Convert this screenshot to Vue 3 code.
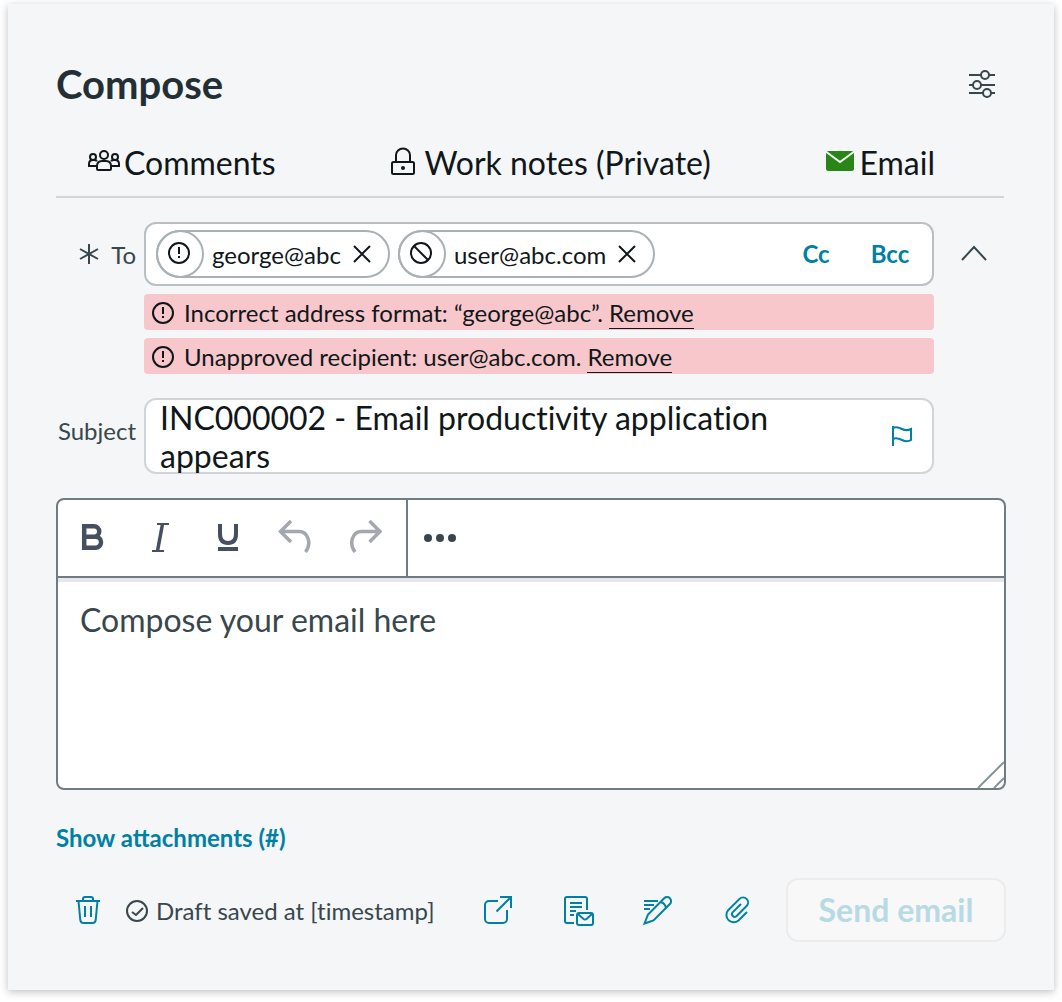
<script setup>
import { ref } from 'vue'

const recipients = ref([
  { address: 'george@abc', status: 'invalid' },
  { address: 'user@abc.com', status: 'blocked' },
])
const errors = ref([
  { id: 1, text: 'Incorrect address format: “george@abc”.' },
  { id: 2, text: 'Unapproved recipient: user@abc.com.' },
])
const subject = ref('INC000002 - Email productivity application appears')
const message = ref('')
</script>

<template>
  <main class="card">
    <header class="header">
      <h1>Compose</h1>
      <button class="icon-btn settings" type="button" aria-label="Settings">
        <svg width="32" height="32" viewBox="0 0 32 32" fill="none" stroke="currentColor" stroke-width="2">
          <path d="M3 7h12M23 7h6M3 17h4M15 17h14M3 25h14M25 25h4" />
          <circle cx="19" cy="7" r="4" /><circle cx="11" cy="17" r="4" /><circle cx="21" cy="25" r="4" />
        </svg>
      </button>
    </header>

    <nav class="tabs">
      <button class="tab" type="button">
        <svg width="32" height="32" viewBox="0 0 32 32" fill="none" stroke="currentColor" stroke-width="2">
          <circle cx="16" cy="9" r="4" />
          <path d="M9 23v-3q0-5 5-5h4q5 0 5 5v3q0 1-1 1H10q-1 0-1-1z" />
          <circle cx="5" cy="11" r="3" /><circle cx="27" cy="11" r="3" />
          <path d="M9 20H1v-2q0-4 4-4h1q2 0 3 1M23 20h8v-2q0-4-4-4h-1q-2 0-3 1" />
        </svg>
        <span>Comments</span>
      </button>
      <button class="tab" type="button">
        <svg width="32" height="32" viewBox="0 0 32 32" fill="none" stroke="currentColor" stroke-width="2">
          <rect x="4" y="16" width="22" height="12" rx="1.5" />
          <path d="M8 16V9a7 6.500 0 0 1 14 0v7" />
          <circle cx="15" cy="22" r="2" fill="currentColor" stroke="none" />
        </svg>
        <span>Work notes (Private)</span>
      </button>
      <button class="tab" type="button">
        <svg width="32" height="32" viewBox="0 0 32 32">
          <rect x="2" y="5" width="28" height="20" rx="2.500" fill="#2a8518" />
          <path d="M1 5l15 11L31 5" fill="none" stroke="#f4f6f8" stroke-width="2" />
        </svg>
        <span>Email</span>
      </button>
    </nav>

    <section class="fields">
      <label class="label" for="to">
        <svg width="20" height="22" viewBox="0 0 20 22" fill="none" stroke="currentColor" stroke-width="2">
          <path d="M10 1v20M1 6l18 10M19 6L1 16" />
        </svg>
        <span class="nudged">To</span>
      </label>
      <div class="to-column">
        <div class="to-box">
          <div v-for="r in recipients" :key="r.address" class="chip">
            <span class="chip-status">
              <svg width="24" height="24" viewBox="0 0 24 24" fill="none" stroke="currentColor" stroke-width="2">
                <circle cx="12" cy="12" r="10" />
                <path v-if="r.status === 'invalid'" d="M12 6v7M12 15v2" />
                <path v-else d="M5 5l14 14" />
              </svg>
            </span>
            <span class="nudged">{{ r.address }}</span>
            <button class="icon-btn chip-remove" type="button" :aria-label="'Remove ' + r.address">
              <svg width="18" height="18" viewBox="0 0 18 18" fill="none" stroke="currentColor" stroke-width="2">
                <path d="M1 1l16 16M17 1L1 17" />
              </svg>
            </button>
          </div>
          <input id="to" class="to-input" type="text" />
          <button class="link-btn copy" type="button">Cc</button>
          <button class="link-btn copy" type="button">Bcc</button>
        </div>
        <p v-for="e in errors" :key="e.id" class="error">
          <svg width="22" height="22" viewBox="0 0 22 22" fill="none" stroke="currentColor" stroke-width="2">
            <circle cx="11" cy="11" r="10" /><path d="M11 5v7M11 14v2" />
          </svg>
          <span>{{ e.text }} <a href="#">Remove</a></span>
        </p>
      </div>
      <button class="icon-btn collapse" type="button" aria-label="Collapse">
        <svg width="26" height="16" viewBox="0 0 26 16" fill="none" stroke="currentColor" stroke-width="2">
          <path d="M1 15L13 2l12 13" />
        </svg>
      </button>

      <label class="label subject-label" for="subject">Subject</label>
      <div class="subject-box">
        <textarea id="subject" v-model="subject"></textarea>
        <button class="icon-btn flag" type="button" aria-label="Priority">
          <svg width="24" height="24" viewBox="0 0 24 24" fill="none" stroke="currentColor" stroke-width="2">
            <path d="M3 2v20" />
            <path d="M3 4c3-1.500 6-.5 9 1 3 1.500 6 1.500 9 0v11c-3 2-6 1.500-9 0s-6-2.500-9-1" />
          </svg>
        </button>
      </div>
    </section>

    <section class="editor">
      <div class="toolbar">
        <div class="tools">
          <button class="icon-btn tool" type="button" aria-label="Bold">
            <svg width="36" height="36" viewBox="0 0 36 36" fill="none" stroke="currentColor" stroke-width="4.500">
              <path d="M10.200 6.200H20a5 5 0 0 1 0 10.500H10.200zM10.200 16.700H21.500a5.500 5.500 0 0 1 0 11.100H10.200z" />
            </svg>
          </button>
          <button class="icon-btn tool" type="button" aria-label="Italic">
            <svg width="36" height="36" viewBox="0 0 36 36" fill="none" stroke="currentColor">
              <path d="M20.500 4L15.500 31" stroke-width="3.500" />
              <path d="M15 4h12M10 31h12" stroke-width="2" />
            </svg>
          </button>
          <button class="icon-btn tool" type="button" aria-label="Underline">
            <svg width="36" height="36" viewBox="0 0 36 36" fill="none" stroke="currentColor" stroke-width="4">
              <path d="M10 4v10c0 6 3 9 8 9s8-3 8-9V4" /><path d="M8 29h20" />
            </svg>
          </button>
          <button class="icon-btn tool history" type="button" aria-label="Undo">
            <svg width="36" height="36" viewBox="0 0 36 36" fill="none" stroke="currentColor" stroke-width="3.500">
              <path d="M13 1L2.500 11.500 13 22M3 11.500h18c9 0 13 12 6.500 20.500" />
            </svg>
          </button>
          <button class="icon-btn tool history" type="button" aria-label="Redo">
            <svg width="36" height="36" viewBox="0 0 36 36" fill="none" stroke="currentColor" stroke-width="3.500">
              <path d="M23.500 1l10.500 10.500L23.500 22M33.500 11.500H15.500c-9 0-13 12-6.500 20.500" />
            </svg>
          </button>
        </div>
        <button class="icon-btn more" type="button" aria-label="More">
          <svg width="32" height="8" viewBox="0 0 32 8" fill="currentColor">
            <circle cx="4" cy="4" r="4" /><circle cx="16" cy="4" r="4" /><circle cx="28" cy="4" r="4" />
          </svg>
        </button>
      </div>
      <textarea v-model="message" class="message" aria-label="Message" placeholder="Compose your email here"></textarea>
      <svg class="grip" width="28" height="28" viewBox="0 0 28 28" fill="none" stroke="currentColor" stroke-width="2">
        <path d="M2 28L28 2M18 28l10-10" />
      </svg>
    </section>

    <button class="link-btn attachments" type="button">Show attachments (#)</button>

    <footer class="actions">
      <button class="icon-btn trash" type="button" aria-label="Delete draft">
        <svg width="32" height="32" viewBox="0 0 32 32" fill="none" stroke="currentColor" stroke-width="2">
          <path d="M4 7h24M11 7V5q0-2 2-2h6q2 0 2 2v2M6.500 7l1.800 19q.3 3 3.200 3h9q2.900 0 3.200-3l1.800-19M13 12v11M19 12v11" />
        </svg>
      </button>
      <p class="draft">
        <svg width="22" height="22" viewBox="0 0 22 22" fill="none" stroke="currentColor" stroke-width="2">
          <circle cx="11" cy="11" r="10" /><path d="M6 12l4 3 7-7" />
        </svg>
        Draft saved at [timestamp]
      </p>
      <div class="action-icons">
        <button class="icon-btn action" type="button" aria-label="Open in new window">
          <svg width="32" height="32" viewBox="0 0 32 32" fill="none" stroke="currentColor" stroke-width="2">
            <path d="M16 7H7a4 4 0 0 0-4 4v14a4 4 0 0 0 4 4h14a4 4 0 0 0 4-4V16M18 3h11v11M29 3L14.500 17.500" />
          </svg>
        </button>
        <button class="icon-btn action" type="button" aria-label="Email template">
          <svg width="32" height="32" viewBox="0 0 32 32" fill="none" stroke="currentColor" stroke-width="2">
            <path d="M12 29H5a2 2 0 0 1-2-2V5a2 2 0 0 1 2-2h18a2 2 0 0 1 2 2v11M8 9h12M8 13h12M8 17h6M8 21h4" />
            <rect x="15" y="19" width="16" height="12" rx="2" />
            <path d="M16 20l5.500 5q1.500 1 3 0l5.500-5" />
          </svg>
        </button>
        <button class="icon-btn action" type="button" aria-label="Signature">
          <svg width="32" height="32" viewBox="0 0 32 32" fill="none" stroke="currentColor" stroke-width="2">
            <path d="M2 7h14M2 11h10M2 15h6" />
            <path d="M2.500 29.500L6 20.500 22.200 4.300a4 4 0 0 1 5.700 5.700L11.500 26.400zM18.500 8q4.500 1 5.500 6" />
          </svg>
        </button>
        <button class="icon-btn action" type="button" aria-label="Attach file">
          <svg width="32" height="32" viewBox="0 0 32 32" fill="none" stroke="currentColor" stroke-width="2">
            <path d="M25 18l-8.500 8.500a7.300 7.300 0 0 1-10.300-10.300L17.500 4.900a5 5 0 0 1 7.100 7.100L14.400 22.200a2.700 2.700 0 0 1-3.800-3.800l8.400-8.400" />
          </svg>
        </button>
      </div>
      <button class="send" type="button" disabled>Send email</button>
    </footer>
  </main>
</template>

<style>
body {
  background: #fff;
}
</style>

<style scoped>
.card,
.card * {
  box-sizing: border-box;
}

.card {
  margin: 4px 8px 12px;
  padding: 48px;
  background: #f4f6f8;
  box-shadow: 0 2px 8px rgba(0, 0, 0, 0.25);
  color: #10171a;
  font: 24px/36px Lato, sans-serif;
  display: flow-root;
}

button,
input,
textarea {
  margin: 0;
  padding: 0;
  border: 0;
  background: none;
  color: inherit;
  font: inherit;
  outline: none;
}

svg {
  display: block;
  flex: none;
}

.icon-btn {
  display: flex;
  flex: none;
  align-items: center;
  justify-content: center;
}

.link-btn {
  color: #0080a3;
  font-weight: 700;
}

.header {
  display: flex;
  align-items: center;
  justify-content: space-between;
  height: 64px;
  padding-right: 8px;
  color: #232f34;
}

h1 {
  margin: 0;
  font: 700 40px/48px Lato, sans-serif;
}

.settings {
  color: #38474d;
}

.tabs {
  display: flex;
  justify-content: space-between;
  margin: 12px 2px 24px 0;
  padding: 0 69px 0 32px;
  border-bottom: 2px solid #cfd5d8;
}

.tab {
  display: flex;
  align-items: center;
  gap: 4px;
  height: 68px;
  font-size: 32px;
}

.tab span,
.nudged {
  padding-top: 2px;
}

.fields {
  display: grid;
  grid-template-columns: 80px minmax(0, 1fr) 64px;
  column-gap: 8px;
  row-gap: 24px;
  margin-bottom: 24px;
}

.label {
  display: flex;
  align-items: center;
  justify-content: flex-end;
  gap: 12px;
  height: 64px;
  color: #38474d;
}

.subject-label {
  height: 66px;
}

.to-column {
  display: flex;
  flex-direction: column;
  gap: 8px;
}

.to-box {
  display: flex;
  align-items: center;
  gap: 8px;
  height: 64px;
  padding: 0 9px 0 10px;
  border: 2px solid #b8c0c4;
  border-radius: 12px;
  background: #fff;
}

.chip {
  display: flex;
  flex: none;
  align-items: center;
  height: 48px;
  padding-right: 5px;
  border: 2px solid #a9b1b4;
  border-radius: 24px;
}

.chip-status {
  display: flex;
  align-items: center;
  justify-content: center;
  width: 48px;
  height: 48px;
  margin: -2px 8px -2px -2px;
  padding: 0 2px 2px 0;
  border: 2px solid #a9b1b4;
  border-radius: 50%;
}

.chip-remove {
  width: 42px;
  height: 40px;
}

.to-input {
  flex: 1;
  min-width: 0;
}

.copy {
  width: 66px;
}

.error {
  display: flex;
  align-items: center;
  gap: 10px;
  min-height: 36px;
  margin: 0;
  padding: 2px 8px 0;
  border-radius: 4px;
  background: #f8c7cb;
  line-height: 34px;
}

.error a {
  padding-bottom: 1px;
  border-bottom: 1px solid currentColor;
  color: inherit;
  text-decoration: none;
}

.collapse {
  width: 64px;
  height: 62px;
  color: #38474d;
}

.subject-box {
  display: flex;
  align-items: center;
  height: 76px;
  padding: 0 18px 0 14px;
  border: 2px solid #cfd5d8;
  border-radius: 12px;
  background: #fff;
}

.subject-box textarea {
  flex: 1;
  min-width: 0;
  height: 74px;
  margin-right: 24px;
  overflow: hidden;
  font-size: 32px;
  line-height: 38px;
  resize: none;
}

.subject-box textarea,
.draft {
  font-variant-ligatures: none;
}

.flag {
  color: #0080a3;
}

.editor {
  position: relative;
  border: 2px solid #6f7c82;
  border-radius: 8px;
  background: #fff;
}

.toolbar {
  display: flex;
  height: 78px;
  border-bottom: 2px solid #6f7c82;
}

.tools {
  display: flex;
  padding-right: 8px;
  border-right: 2px solid #6f7c82;
}

.tool {
  width: 68px;
  color: #464f60;
}

.history {
  color: #a3a7ae;
}

.more {
  width: 64px;
  color: #38474d;
}

.message {
  display: block;
  width: 100%;
  height: 210px;
  padding: 19px 22px;
  border-top: 4px solid #e7e6eb;
  font-size: 32px;
  line-height: 38px;
  resize: none;
}

.message::placeholder {
  color: #38474d;
  opacity: 1;
}

.grip {
  position: absolute;
  right: 0;
  bottom: 0;
  color: #87949a;
}

.attachments {
  display: block;
  margin: 30px 0 22px;
}

.actions {
  display: flex;
  align-items: center;
}

.trash {
  width: 64px;
  height: 64px;
  margin-right: 6px;
  color: #0080a3;
}

.draft {
  display: flex;
  align-items: center;
  gap: 8px;
  margin: 0;
  padding-top: 2px;
  color: #38474d;
  white-space: nowrap;
}

.action-icons {
  display: flex;
  margin-left: auto;
}

.action {
  width: 80px;
  height: 64px;
  color: #0080a3;
}

.send {
  width: 220px;
  height: 64px;
  margin-left: 8px;
  border: 2px solid #ececec;
  border-radius: 12px;
  background: #f8f8f8;
  color: #b7dae4;
  font-size: 32px;
  font-weight: 700;
}
</style>
